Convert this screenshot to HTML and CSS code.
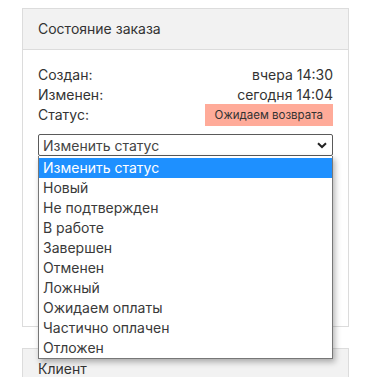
FILE: index.html
```html
<!DOCTYPE html>
<html lang="ru">
<head>
    <meta charset="UTF-8">
    <title>Состояние заказа</title>
    <link rel="stylesheet" href="styles.css">
</head>
<body>
    <div class="card">
        <div class="card-header">Состояние заказа</div>
        <div class="card-body">
            <div class="row"><span>Создан:</span><span>вчера 14:30</span></div>
            <div class="row"><span>Изменен:</span><span>сегодня 14:04</span></div>
            <div class="row"><span>Статус:</span><span class="badge">Ожидаем возврата</span></div>
            <div class="select-wrap">
                <div class="select">
                    <span>Изменить статус</span>
                    <svg class="chevron" width="10" height="7" viewBox="0 0 10 7"><path d="M1 1.2 L5 5 L9 1.2" fill="none" stroke="#222" stroke-width="2"/></svg>
                </div>
                <ul class="options">
                    <li class="active">Изменить статус</li>
                    <li>Новый</li>
                    <li>Не подтвержден</li>
                    <li>В работе</li>
                    <li>Завершен</li>
                    <li>Отменен</li>
                    <li>Ложный</li>
                    <li>Ожидаем оплаты</li>
                    <li>Частично оплачен</li>
                    <li>Отложен</li>
                </ul>
            </div>
        </div>
    </div>
    <div class="card">
        <div class="card-header">Клиент</div>
    </div>
</body>
</html>
```

FILE: styles.css
```css
body {
    margin: 0;
    padding: 8px 24px 0 22px;
    font-family: Inter, "Noto Sans", sans-serif;
    font-size: 14px;
    color: #333;
    background: #fff;
}

.card {
    border: 1px solid #dcdcdc;
    margin-bottom: 21px;
}

.card-header {
    background: #f2f2f2;
    border-bottom: 1px solid #dcdcdc;
    padding: 11px 15px 11px;
    height: 18px;
    line-height: 18px;
}

.card-body {
    height: 261px;
    padding: 15px 15px 0;
}

.row {
    display: flex;
    justify-content: space-between;
    align-items: center;
    height: 20px;
    line-height: 20px;
}

.badge {
    background: #ffab99;
    color: #333;
    font-size: 11.5px;
    padding: 0 10px;
    height: 22px;
    line-height: 22px;
}

.select-wrap {
    position: relative;
    margin-top: 9px;
}

.select {
    display: flex;
    justify-content: space-between;
    align-items: center;
    height: 20px;
    border: 1px solid #5a5a5a;
    border-radius: 2px;
    padding: 0 4px 0 4px;
    color: #444;
}

.chevron {
    margin-right: 1px;
}

.options {
    position: absolute;
    left: 0;
    right: 0;
    top: 22px;
    margin: 0;
    padding: 2px 0 0;
    list-style: none;
    background: #fff;
    border: 1px solid #777;
    border-top: none;
    box-shadow: 2px 3px 6px rgba(0, 0, 0, 0.3);
}

.options li {
    height: 20px;
    line-height: 20px;
    padding: 0 4px;
    color: #3a3a3a;
}

.options li.active {
    background: #1e90ff;
    color: #fff;
}
```
